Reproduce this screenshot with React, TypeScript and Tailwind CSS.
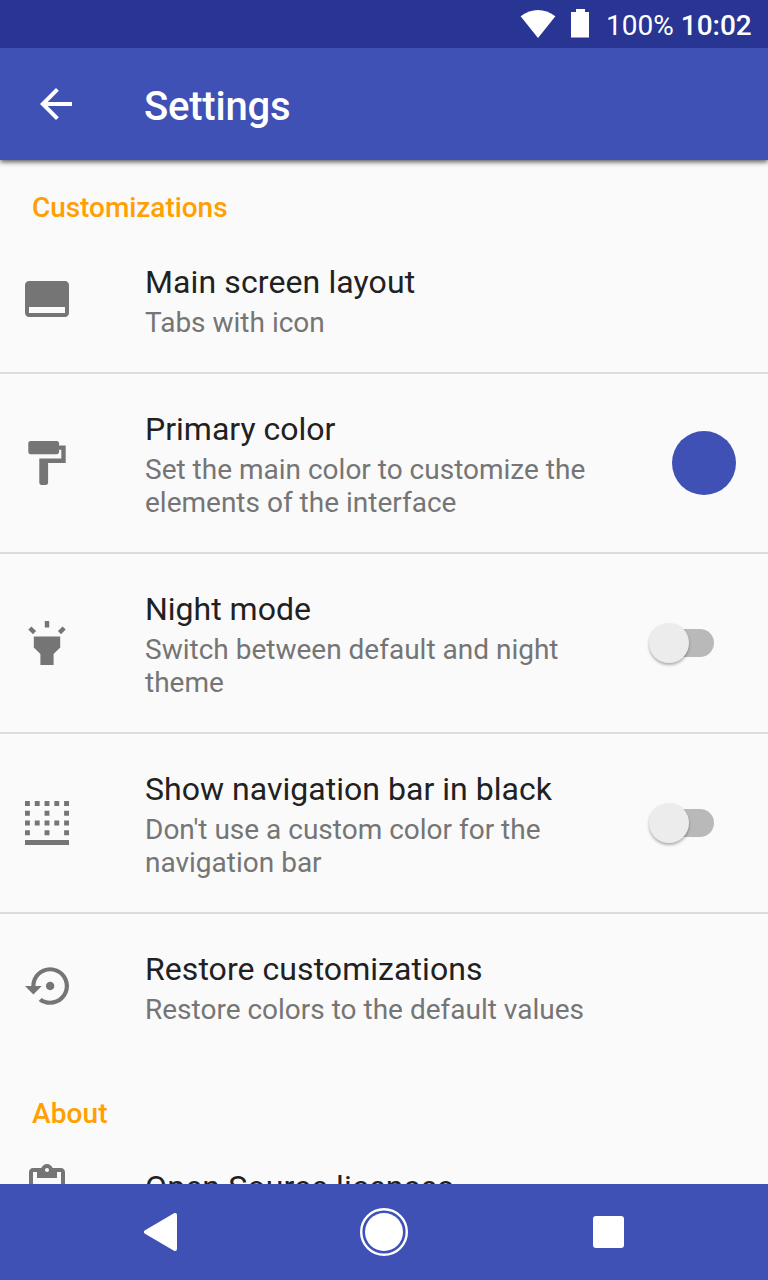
import React from "react";

const ICONS = {
  layout: { box: "0 0 24 24", path: "M21 3H3c-1.1 0-2 .9-2 2v14c0 1.1.9 2 2 2h18c1.1 0 2-.9 2-2V5c0-1.1-.9-2-2-2zm0 16H3v-3h18v3z" },
  paint: { box: "2.5 2 20 20", path: "M18 4V3c0-.55-.45-1-1-1H5c-.55 0-1 .45-1 1v4c0 .55.45 1 1 1h12c.55 0 1-.45 1-1V6h1v4H9v11c0 .55.45 1 1 1h2c.55 0 1-.45 1-1v-9h8V4h-3z" },
  highlight: { box: "2 2 20 20", path: "M6 14l3 3v5h6v-5l3-3V9H6zm5-12h2v3h-2zM3.5 5.875L4.914 4.46l2.12 2.122L5.62 7.997zm13.46.71l2.123-2.12 1.414 1.414L18.375 8z" },
  border: { box: "3 3 18 18", path: "M9 11H7v2h2v-2zm4 4h-2v2h2v-2zM9 3H7v2h2V3zm4 8h-2v2h2v-2zM5 3H3v2h2V3zm8 4h-2v2h2V7zm4 4h-2v2h2v-2zm-4-8h-2v2h2V3zm4 0h-2v2h2V3zm2 10h2v-2h-2v2zm0 4h2v-2h-2v2zM5 7H3v2h2V7zm14-4v2h2V3h-2zm0 6h2V7h-2v2zM5 11H3v2h2v-2zM3 21h18v-2H3v2zm2-6H3v2h2v-2z" },
  restore: { box: "0 3 21 18", path: "M14 12c0-1.1-.9-2-2-2s-2 .9-2 2 .9 2 2 2 2-.9 2-2zm-2-9c-4.97 0-9 4.03-9 9H0l4 4 4-4H5c0-3.87 3.13-7 7-7s7 3.13 7 7-3.13 7-7 7c-1.51 0-2.91-.49-4.06-1.3l-1.42 1.44C8.04 20.3 9.94 21 12 21c4.97 0 9-4.03 9-9s-4.03-9-9-9z" },
  clipboard: { box: "0 0 24 24", path: "M19 2h-4.18C14.4.84 13.3 0 12 0c-1.3 0-2.4.84-2.82 2H5c-1.1 0-2 .9-2 2v16c0 1.1.9 2 2 2h14c1.1 0 2-.9 2-2V4c0-1.1-.9-2-2-2zm-7 0c.55 0 1 .45 1 1s-.45 1-1 1-1-.45-1-1 .45-1 1-1zm7 18H5V4h2v3h10V4h2v16z" },
};

interface RowProps {
  icon: { box: string; path: string };
  iconClass: string;
  title: string;
  lines?: string[];
  className: string;
  titleClass?: string;
  children?: React.ReactNode;
}

function Row({ icon, iconClass, title, lines = [], className, titleClass = "", children }: RowProps) {
  return (
    <div className={`flex shrink-0 border-[#dcdcdc] ${className}`}>
      <div className="w-[145px] shrink-0">
        <svg viewBox={icon.box} className={`fill-[#757575] ${iconClass}`}><path d={icon.path} /></svg>
      </div>
      <div className="min-w-0 flex-1 pt-[36px]">
        <div className={`whitespace-nowrap text-[32px] leading-[38px] text-[#212121] ${titleClass}`}>{title}</div>
        <div className="mt-[5px] text-[28px] leading-[33px] text-[#757575]">
          {lines.map((l) => <div key={l} className="whitespace-nowrap">{l}</div>)}
        </div>
      </div>
      {children}
    </div>
  );
}

function Toggle() {
  return (
    <div className="mr-[54px] mt-[69px] flex h-10 w-[65px] shrink-0 items-center">
      <div className="z-10 h-10 w-10 shrink-0 rounded-full bg-[#ececec] shadow-[0_2px_3px_rgba(0,0,0,0.3)]" />
      <div className="-ml-[35px] h-7 w-[60px] shrink-0 rounded-full bg-[#b9b9b9]" />
    </div>
  );
}

export default function App() {
  return (
    <div className="flex h-[1280px] w-[768px] flex-col overflow-hidden bg-[#fafafa] font-['Roboto',sans-serif]">
      <div className="z-20 flex h-12 shrink-0 items-start bg-[#283593] pl-[520px] text-[28px] leading-[42px] text-white">
        <svg viewBox="0 0 36 28" className="mt-[10px] h-7 w-9 shrink-0 fill-white"><path d="M.6 6.2Q18-6.2 35.4 6.2L18 28Z" /></svg>
        <svg viewBox="0 0 18 29" className="ml-[15px] mt-[9px] h-[29px] w-[18px] shrink-0 fill-white"><path d="M5 0h9v3h4v25.6H0V3h5z" /></svg>
        <span className="ml-[17px] mt-[5px]">100%</span>
        <span className="ml-[7px] mt-[5px] font-medium">10:02</span>
      </div>
      <header className="z-10 flex h-28 shrink-0 items-center bg-[#3f51b5] pl-8 shadow-[0_2px_5px_rgba(0,0,0,0.65)]">
        <svg viewBox="0 0 24 24" className="h-12 w-12 fill-white"><path d="M20 11H7.83l5.59-5.59L12 4l-8 8 8 8 1.41-1.41L7.83 13H20v-2z" /></svg>
        <h1 className="ml-16 mt-[5px] text-[40px] font-medium tracking-[-0.2px] text-white">Settings</h1>
      </header>
      <main className="flex h-[1024px] shrink-0 flex-col overflow-hidden">
        <h2 className="mt-[31px] h-[36px] shrink-0 pl-8 text-[28px] font-medium leading-[33px] tracking-[-0.05px] text-[#ffa000]">Customizations</h2>
        <Row icon={ICONS.layout} iconClass="ml-[23px] mt-[48px] h-12 w-12" title="Main screen layout" titleClass="tracking-[0.11px]" lines={["Tabs with icon"]} className="h-[147px] border-b-2" />
        <Row icon={ICONS.paint} iconClass="ml-[25px] mt-[67px] h-11 w-11" title="Primary color" lines={["Set the main color to customize the", "elements of the interface"]} className="h-[180px] border-b-2">
          <div className="mr-8 mt-[57px] h-16 w-16 shrink-0 rounded-full bg-[#3f51b5]" />
        </Row>
        <Row icon={ICONS.highlight} iconClass="ml-[25px] mt-[67px] h-11 w-11" title="Night mode" lines={["Switch between default and night", "theme"]} className="h-[180px] border-b-2"><Toggle /></Row>
        <Row icon={ICONS.border} iconClass="ml-[25px] mt-[67px] h-11 w-11" title="Show navigation bar in black" titleClass="tracking-[0.03px]" lines={["Don't use a custom color for the", "navigation bar"]} className="h-[180px] border-b-2"><Toggle /></Row>
        <Row icon={ICONS.restore} iconClass="ml-[25px] mt-[53px] h-[38px] w-[44px]" title="Restore customizations" titleClass="tracking-[0.06px]" lines={["Restore colors to the default values"]} className="h-[147px]" />
        <h2 className="mt-[36px] h-[35px] shrink-0 pl-8 text-[28px] font-medium leading-[33px] tracking-[0.1px] text-[#ffa000]">About</h2>
        <Row icon={ICONS.clipboard} iconClass="ml-[23px] mt-[32px] h-12 w-12" title="Open Source licenses" titleClass="tracking-[0.12px]" className="h-[147px]" />
      </main>
      <nav className="flex h-24 shrink-0 items-center bg-[#3f51b5] pl-36">
        <svg viewBox="0 0 33 38" className="h-[38px] w-[33px] fill-white"><path d="M2 19L31 2V36Z" stroke="white" strokeWidth="4" strokeLinejoin="round" /></svg>
        <svg viewBox="0 0 48 48" className="ml-[183px] h-12 w-12 fill-white">
          <circle cx="24" cy="24" r="19" />
          <circle cx="24" cy="24" r="22.8" fill="none" stroke="white" strokeWidth="2.4" />
        </svg>
        <div className="ml-[185px] h-8 w-[31px] rounded-[3px] bg-white" />
      </nav>
    </div>
  );
}
